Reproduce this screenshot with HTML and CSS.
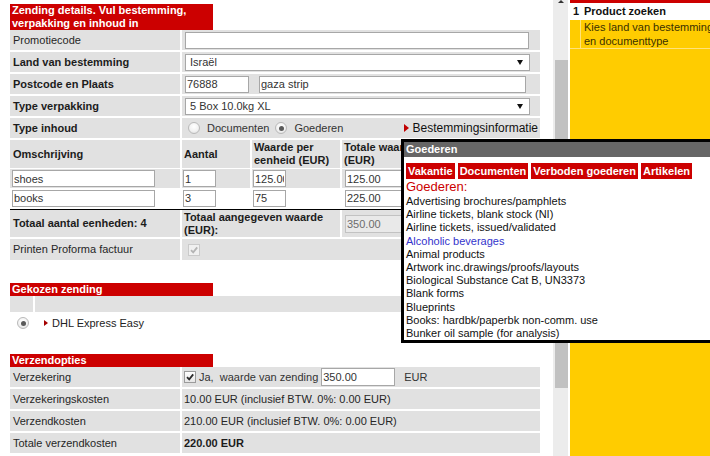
FILE: index.html
```html
<!DOCTYPE html>
<html lang="nl">
<head>
<meta charset="utf-8">
<title>Zending details</title>
<link rel="stylesheet" href="styles.css">
</head>
<body>
<div class="page">
  <main class="main">
    <h2 class="title">Zending details. Vul bestemming,<br>verpakking en inhoud in</h2>

    <div class="row h20 first">
      <div class="c lbl">Promotiecode</div>
      <div class="c s3"><input class="inp promo" type="text" value=""></div>
    </div>
    <div class="row h20">
      <div class="c lbl b">Land van bestemming</div>
      <div class="c s3"><div class="sel">Israël<span class="arr"></span></div></div>
    </div>
    <div class="row h20">
      <div class="c lbl b">Postcode en Plaats</div>
      <div class="c s3"><input class="inp pc" type="text" value="76888"><input class="inp city" type="text" value="gaza strip"></div>
    </div>
    <div class="row h20">
      <div class="c lbl b">Type verpakking</div>
      <div class="c s3"><div class="sel">5 Box 10.0kg XL<span class="arr"></span></div></div>
    </div>
    <div class="row h20">
      <div class="c lbl b">Type inhoud</div>
      <div class="c s3 inhoud">
        <span class="radio"></span><span class="rtxt">Documenten</span>
        <span class="radio on"></span><span class="rtxt">Goederen</span>
        <span class="info"><span class="tri"></span>Bestemmingsinformatie</span>
      </div>
    </div>

    <div class="row h28">
      <div class="c lbl b">Omschrijving</div>
      <div class="c b">Aantal</div>
      <div class="c b">Waarde per<br>eenheid (EUR)</div>
      <div class="c b">Totale waarde<br>(EUR)</div>
    </div>
    <div class="row item shoes">
      <div class="c ic1"><input class="inp desc" type="text" value="shoes"></div>
      <div class="c icn"><input class="inp qty" type="text" value="1"></div>
      <div class="c icn"><input class="inp val" type="text" value="125.00"></div>
      <div class="c icn"><input class="inp tot" type="text" value="125.00"></div>
    </div>
    <div class="row item books">
      <div class="c ic1"><input class="inp desc" type="text" value="books"></div>
      <div class="c icn"><input class="inp qty" type="text" value="3"></div>
      <div class="c icn"><input class="inp val" type="text" value="75"></div>
      <div class="c icn"><input class="inp tot" type="text" value="225.00"></div>
    </div>
    <div class="rule"></div>
    <div class="row h27 first">
      <div class="c lbl b">Totaal aantal eenheden: 4</div>
      <div class="c s2 b">Totaal aangegeven waarde<br>(EUR):</div>
      <div class="c icn"><input class="inp dis" type="text" value="350.00" readonly></div>
    </div>
    <div class="row h21">
      <div class="c lbl">Printen Proforma factuur</div>
      <div class="c s3 pad6"><span class="cb dis"><svg viewBox="0 0 10 10" width="10" height="10"><path d="M2 5.2 L4.2 7.4 L8.2 2.4" fill="none" stroke="currentColor" stroke-width="1.8"/></svg></span></div>
    </div>

    <h2 class="title t2">Gekozen zending</h2>
    <div class="subrow">
      <div class="c"></div>
      <div class="c"></div>
    </div>
    <div class="dhl">
      <span class="radio on"></span>
      <span class="tri sm"></span>
      <span>DHL Express Easy</span>
    </div>

    <h2 class="title t3">Verzendopties</h2>
    <div class="row2 first">
      <div class="c lbl">Verzekering</div>
      <div class="c">
        <span class="cb"><svg viewBox="0 0 10 10" width="10" height="10"><path d="M2 5.2 L4.2 7.4 L8.2 2.4" fill="none" stroke="currentColor" stroke-width="1.8"/></svg></span>
        <span class="ja">Ja,&nbsp; waarde van zending</span>
        <input class="inp ins" type="text" value="350.00">
        <span class="eur">EUR</span>
      </div>
    </div>
    <div class="row2">
      <div class="c lbl">Verzekeringskosten</div>
      <div class="c">10.00 EUR (inclusief BTW. 0%: 0.00 EUR)</div>
    </div>
    <div class="row2">
      <div class="c lbl">Verzendkosten</div>
      <div class="c">210.00 EUR (inclusief BTW. 0%: 0.00 EUR)</div>
    </div>
    <div class="row2">
      <div class="c lbl">Totale verzendkosten</div>
      <div class="c b">220.00 EUR</div>
    </div>
  </main>

  <div class="scroll">
    <div class="up"></div>
    <div class="thumb"></div>
  </div>

  <aside class="side">
    <div class="step"><span class="n">1</span>Product zoeken</div>
    <div class="stepinfo"><p>Kies land van bestemming<br>en documenttype</p></div>
  </aside>
</div>

<div class="popup">
  <div class="pop-head">Goederen</div>
  <div class="pop-body">
    <div class="tabs">
      <span class="tab">Vakantie</span>
      <span class="tab">Documenten</span>
      <span class="tab">Verboden goederen</span>
      <span class="tab">Artikelen</span>
    </div>
    <div class="pop-title">Goederen:</div>
    <ul class="goods">
      <li>Advertising brochures/pamphlets</li>
      <li>Airline tickets, blank stock (NI)</li>
      <li>Airline tickets, issued/validated</li>
      <li class="link">Alcoholic beverages</li>
      <li>Animal products</li>
      <li>Artwork inc.drawings/proofs/layouts</li>
      <li>Biological Substance Cat B, UN3373</li>
      <li>Blank forms</li>
      <li>Blueprints</li>
      <li>Books: hardbk/paperbk non-comm. use</li>
      <li>Bunker oil sample (for analysis)</li>
    </ul>
  </div>
</div>
</body>
</html>
```

FILE: styles.css
```css
* { box-sizing: border-box; margin: 0; padding: 0; }
html, body { width: 710px; height: 456px; overflow: hidden; background: #fff; }
body {
  position: relative;
  font-family: "Liberation Sans", Arial, Helvetica, sans-serif;
  font-size: 11px;
  line-height: 13px;
  color: #262626;
}
.page { display: flex; width: 710px; height: 456px; overflow: hidden; }

/* main form column */
.main { flex: none; width: 553px; padding: 4px 13px 0 10px; }
.title {
  width: 203px;
  padding: 0 2px;
  background: #cc0000;
  color: #fff;
  font-size: 11px;
  font-weight: bold;
  line-height: 13px;
}
.t2 { margin-top: 23px; }
.t3 { margin-top: 20px; }

.row {
  display: grid;
  grid-template-columns: 170px 68px 88px 198px;
  column-gap: 2px;
  margin-top: 2px;
}
.row.first { margin-top: 0; }
.h20 { height: 20px; }
.h21 { height: 21px; }
.h27 { height: 27px; }
.h28 { height: 28px; }
.c {
  display: flex;
  align-items: center;
  min-width: 0;
  overflow: hidden;
  background: #e1e1e1;
  padding-left: 2px;
  white-space: nowrap;
}
.lbl { padding-left: 3px; }
.b { font-weight: bold; color: #1c1c1c; }
.s3 { grid-column: span 3; }
.s2 { grid-column: span 2; }
.pad6 { padding-left: 6px; }

/* inputs */
.inp {
  display: block;
  height: 17px;
  border: 1px solid #a7a7a7;
  background: #fff;
  font-family: inherit;
  font-size: 11px;
  color: #333;
  padding: 0 1px;
  outline: none;
}
.promo { width: 344px; margin-left: 1px; }
.pc { width: 64px; margin-left: 1px; }
.city { width: 267px; margin-left: 10px; }
.sel {
  position: relative;
  width: 345px;
  height: 17px;
  margin-left: 1px;
  border: 1px solid #a7a7a7;
  background: #fff;
  color: #333;
  padding-left: 4px;
  line-height: 15px;
}
.arr {
  position: absolute;
  right: 6px;
  top: 5px;
  width: 0;
  height: 0;
  border-top: 5px solid #111;
  border-left: 3px solid transparent;
  border-right: 3px solid transparent;
}

/* type inhoud */
.inhoud { padding-left: 6px; padding-right: 2px; }
.radio {
  flex: none;
  display: grid;
  place-items: center;
  width: 12px;
  height: 12px;
  border-radius: 50%;
  border: 1px solid #b9b9b9;
  background: radial-gradient(circle at 50% 35%, #ffffff 0%, #f2f2f2 55%, #dadada 100%);
}
.radio.on::after {
  content: "";
  width: 5px;
  height: 5px;
  border-radius: 50%;
  background: #5a5a5a;
}
.rtxt { margin: 0 6px 0 7px; color: #333; }
.info { margin-left: auto; display: flex; align-items: center; font-size: 12px; color: #111; }
.tri {
  flex: none;
  width: 0;
  height: 0;
  border-left: 5px solid #c00000;
  border-top: 4px solid transparent;
  border-bottom: 4px solid transparent;
  margin-right: 4px;
}

/* item rows */
.item { height: 20px; }
.shoes { margin-top: 1px; height: 19px; }
.books { margin-top: 0; }
.books .c { background: #fff; }
.ic1 { padding-left: 2px; }
.icn { padding-left: 1px; }
.desc { width: 143px; }
.qty { width: 33px; }
.val { width: 33px; }
.tot { width: 110px; margin-left: 2px; }
.rule { height: 1px; background: #000; margin-top: 1px; }
.dis {
  width: 70px;
  height: 18px;
  margin-left: 2px;
  background: #e9e9e9;
  border-color: #c2c2c2;
  color: #6d6d6d;
}

/* checkbox */
.cb {
  flex: none;
  display: grid;
  place-items: center;
  width: 12px;
  height: 12px;
  border: 1px solid #9b9b9b;
  background: linear-gradient(#ffffff, #e6e6e6);
  color: #2b2b2b;
}
.cb.dis {
  margin: 0;
  border-color: #cacaca;
  background: #f0f0f0;
  color: #b4b4b4;
}

/* gekozen zending */
.subrow {
  display: grid;
  grid-template-columns: 23px 505px;
  column-gap: 2px;
  height: 16px;
}
.dhl {
  display: flex;
  align-items: center;
  height: 22px;
  padding-left: 7px;
  color: #222;
  font-size: 11px;
}
.tri.sm {
  border-left-width: 4px;
  border-top-width: 3.5px;
  border-bottom-width: 3.5px;
  margin: 0 4px 0 15px;
  border-left-color: #a40000;
}

/* verzendopties */
.row2 {
  display: grid;
  grid-template-columns: 170px 358px;
  column-gap: 2px;
  height: 20px;
  margin-top: 2px;
}
.row2.first { margin-top: 0; }
.ja { margin-left: 3px; color: #333; }
.ins { width: 74px; height: 18px; margin-left: 3px; }
.eur { margin-left: 9px; color: #333; }

/* scrollbar */
.scroll {
  flex: none;
  width: 17px;
  border-right: 2px solid #fff;
  background: #ececec;
  position: relative;
}
.up {
  width: 0;
  height: 0;
  margin: 0 auto;
  border-bottom: 3px solid #333;
  border-left: 3px solid transparent;
  border-right: 3px solid transparent;
}
.thumb {
  width: 13px;
  height: 328px;
  margin: 57px 0 0 2px;
  background: #c1c1c1;
}

/* side panel */
.side {
  flex: none;
  width: 170px;
  background: #ffcc00;
  border-top: 3px solid #cc0000;
}
.step {
  display: flex;
  align-items: center;
  height: 17px;
  padding-left: 3px;
  background: #fff;
  font-weight: bold;
  color: #111;
}
.step .n { width: 11px; }
.stepinfo { border-bottom: 1px solid #ffe27a; }
.stepinfo p {
  margin-left: 10px;
  padding-left: 3px;
  border-left: 1px solid #ffe27a;
  line-height: 14px;
  color: #3a3000;
  white-space: nowrap;
}

/* popup */
.popup {
  position: absolute;
  left: 401px;
  top: 139px;
  width: 330px;
  height: 204px;
  border: 3px solid #000;
  background: #fff;
}
.pop-head {
  height: 15px;
  line-height: 15px;
  padding-left: 2px;
  background: #666;
  color: #fff;
  font-weight: bold;
}
.pop-body { padding: 6px 2px 0 2px; }
.tabs { display: flex; gap: 3px; height: 16px; }
.tab {
  padding: 0 2px;
  background: #cc0000;
  color: #fff;
  font-weight: bold;
  line-height: 16px;
}
.pop-title { font-size: 13px; line-height: 16px; color: #cc0000; }
.goods { list-style: none; }
.goods li { line-height: 13.2px; color: #111; white-space: nowrap; }
.goods li.link { color: #3333cc; }
```
